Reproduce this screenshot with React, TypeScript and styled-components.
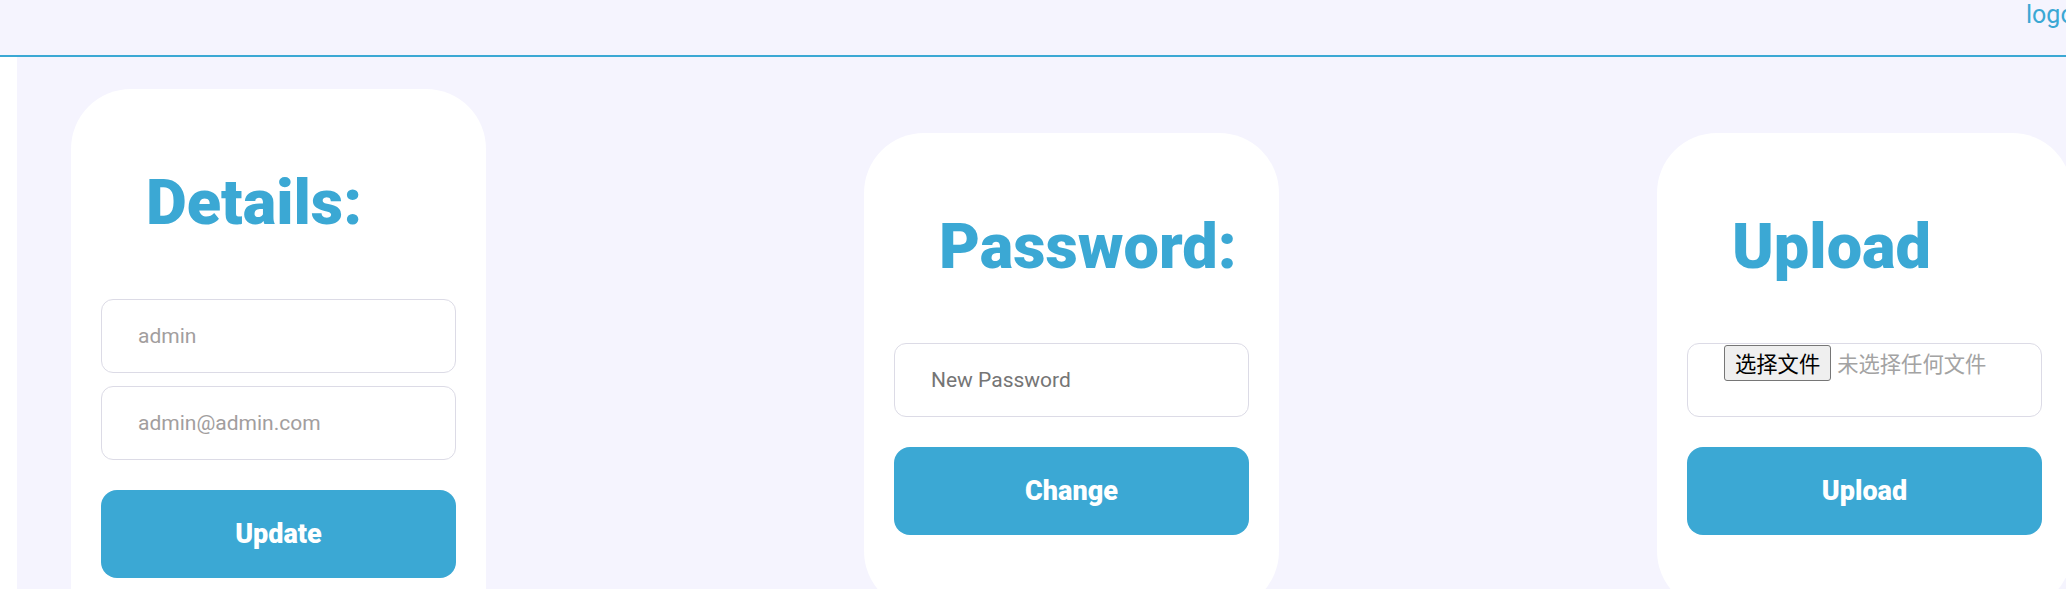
import React from "react";
import styled, { createGlobalStyle } from "styled-components";

const BLUE = "#3ba8d4";
const BG = "#f5f4fe";

const GlobalStyle = createGlobalStyle`
  html, body {
    margin: 0;
    padding: 0;
    background: ${BG};
    overflow: hidden;
  }
  body {
    font-family: Roboto, "Noto Sans", Arial, sans-serif;
  }
  * { box-sizing: border-box; }
`;

const Page = styled.div`
  width: 100%;
  min-height: 100vh;
  overflow: hidden;
`;

const Header = styled.header`
  height: 57px;
  display: flex;
  justify-content: flex-end;
  align-items: flex-start;
  border-bottom: 2px solid ${BLUE};
  background: ${BG};
`;

const Logo = styled.a`
  width: 40px;
  overflow: hidden;
  white-space: nowrap;
  color: ${BLUE};
  font-family: Roboto, sans-serif;
  font-size: 25px;
  line-height: 29px;
  text-decoration: none;
`;

const Body = styled.div`
  display: flex;
`;

const Sidebar = styled.aside`
  width: 17px;
  flex-shrink: 0;
  background: #ffffff;
`;

const Main = styled.main`
  flex: 1;
  display: flex;
  align-items: center;
  gap: 378px;
  padding: 32px 0 32px 54px;
`;

const Card = styled.section`
  width: 415px;
  flex-shrink: 0;
  background: #ffffff;
  border-radius: 60px;
  padding: 0 30px 76px;
  display: flex;
  flex-direction: column;
`;

const Title = styled.h2`
  margin: 76px 0 59px 45px;
  font-family: Roboto, sans-serif;
  font-weight: 900;
  font-size: 63px;
  line-height: 75px;
  color: ${BLUE};
`;

const Fields = styled.div`
  display: flex;
  flex-direction: column;
  gap: 13px;
`;

const TextInput = styled.input<{ $muted?: boolean }>`
  width: 100%;
  height: 74px;
  border: 1px solid #dcdbe6;
  border-radius: 12px;
  padding: 0 36px;
  font-family: Roboto, sans-serif;
  font-size: 21px;
  color: ${(p) => (p.$muted ? "#a29e9e" : "#333")};
  background: #fff;
  outline: none;
  &::placeholder {
    color: #757575;
  }
`;

const FileBox = styled.label`
  width: 100%;
  height: 74px;
  border: 1px solid #dcdbe6;
  border-radius: 12px;
  padding: 1px 36px 0;
  display: flex;
  align-items: flex-start;
  background: #fff;
`;

const FileButton = styled.span`
  height: 36px;
  padding: 0 10px;
  display: inline-flex;
  align-items: center;
  background: #efefef;
  border: 1px solid #767676;
  border-radius: 3px;
  color: #000;
  font-family: "Noto Sans CJK SC", sans-serif;
  font-size: 21.3px;
  white-space: nowrap;
`;

const FileName = styled.span`
  margin-left: 6px;
  line-height: 36px;
  color: #a3a3a3;
  font-family: "Noto Sans CJK SC", sans-serif;
  font-size: 21.3px;
  white-space: nowrap;
`;

const Submit = styled.button`
  margin-top: 30px;
  width: 100%;
  height: 88px;
  border: none;
  border-radius: 16px;
  background: ${BLUE};
  color: #fff;
  font-family: Roboto, sans-serif;
  font-weight: 900;
  font-size: 27px;
  cursor: pointer;
`;

export default function App() {
  return (
    <Page>
      <GlobalStyle />
      <Header>
        <Logo href="#">logo</Logo>
      </Header>
      <Body>
        <Sidebar />
        <Main>
          <Card>
            <Title>Details:</Title>
            <Fields>
              <TextInput $muted defaultValue="admin" />
              <TextInput $muted defaultValue="admin@admin.com" />
            </Fields>
            <Submit>Update</Submit>
          </Card>
          <Card>
            <Title>Password:</Title>
            <Fields>
              <TextInput type="password" placeholder="New Password" />
            </Fields>
            <Submit>Change</Submit>
          </Card>
          <Card>
            <Title>Upload</Title>
            <Fields>
              <FileBox>
                <FileButton>选择文件</FileButton>
                <FileName>未选择任何文件</FileName>
              </FileBox>
            </Fields>
            <Submit>Upload</Submit>
          </Card>
        </Main>
      </Body>
    </Page>
  );
}
